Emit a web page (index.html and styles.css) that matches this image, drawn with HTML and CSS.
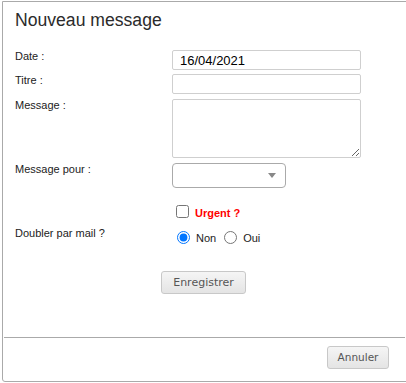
FILE: index.html
```html
<!DOCTYPE html>
<html lang="fr">
<head>
<meta charset="utf-8">
<title>Nouveau message</title>
<link rel="stylesheet" href="styles.css">
</head>
<body>
<div class="dialog">
  <h1 class="title">Nouveau message</h1>
  <form class="form">
    <div class="row row-date">
      <label class="label">Date :</label>
      <input class="field" type="text" value="16/04/2021">
    </div>
    <div class="row row-titre">
      <label class="label">Titre :</label>
      <input class="field" type="text" value="">
    </div>
    <div class="row row-message">
      <label class="label">Message :</label>
      <textarea class="area"></textarea>
    </div>
    <div class="row row-pour">
      <label class="label">Message pour :</label>
      <div class="select"><span class="arrow"></span></div>
    </div>
    <div class="row row-urgent">
      <span class="label"></span>
      <div class="check">
        <input class="checkbox" type="checkbox" id="urgent">
        <label class="urgent" for="urgent">Urgent ?</label>
      </div>
    </div>
    <div class="row row-mail">
      <label class="label">Doubler par mail ?</label>
      <div class="radios">
        <input class="radio" type="radio" name="mail" id="non" checked>
        <label class="opt" for="non">Non</label>
        <input class="radio radio-oui" type="radio" name="mail" id="oui">
        <label class="opt" for="oui">Oui</label>
      </div>
    </div>
    <div class="actions">
      <button type="button" class="btn btn-save">Enregistrer</button>
    </div>
  </form>
  <div class="footer">
    <button type="button" class="btn btn-cancel">Annuler</button>
  </div>
</div>
</body>
</html>
```

FILE: styles.css
```css
html, body {
  margin: 0;
  padding: 0;
  background: #ffffff;
  overflow: hidden;
}

body {
  font-family: "Liberation Sans", Arial, sans-serif;
  color: #222;
}

.dialog {
  box-sizing: border-box;
  margin: 1px 0 0 2px;
  width: 405px;
  height: 381px;
  border: 1px solid #aaaaaa;
  border-radius: 0 0 0 3px;
  background: #fff;
  display: flex;
  flex-direction: column;
}

.title {
  margin: 0;
  padding: 8px 0 0 12px;
  font-size: 17.6px;
  line-height: 20px;
  font-weight: normal;
  color: #2b2b2b;
}

.form {
  margin: 20px 0 0 0;
  padding: 0 0 0 12px;
}

.row {
  display: flex;
  align-items: flex-start;
}

.label {
  width: 157px;
  flex: none;
  font-size: 11px;
  line-height: 13px;
  color: #222;
}

.row-date { margin-bottom: 4px; }
.row-titre { margin-bottom: 5px; }
.row-message { margin-bottom: 5px; }
.row-urgent { margin-top: 17px; }
.row-mail { margin-top: 9px; }

.field {
  box-sizing: border-box;
  width: 189px;
  height: 20px;
  margin: 0;
  padding: 0 7px;
  border: 1px solid #cfcfcf;
  border-radius: 2px;
  font-family: "Liberation Sans", Arial, sans-serif;
  font-size: 13px;
  color: #000;
  background: #fff;
  outline: none;
}

.area {
  display: block;
  box-sizing: border-box;
  width: 189px;
  height: 59px;
  margin: 0;
  padding: 2px 4px;
  border: 1px solid #cfcfcf;
  border-radius: 2px;
  font-family: "Liberation Sans", Arial, sans-serif;
  font-size: 13px;
  background: #fff;
}

.select {
  box-sizing: border-box;
  width: 114px;
  height: 25px;
  border: 1px solid #aaaaaa;
  border-radius: 4px;
  background: #fff;
  display: flex;
  align-items: center;
  justify-content: flex-end;
  padding-right: 9px;
}

.arrow {
  width: 0;
  height: 0;
  border-style: solid;
  border-width: 5px 4px 0 4px;
  border-color: #888 transparent transparent transparent;
}

.check {
  display: flex;
  align-items: center;
  height: 13px;
}

.checkbox {
  width: 13px;
  height: 13px;
  margin: 0 6px 0 4px;
}

.urgent {
  font-size: 11px;
  line-height: 13px;
  font-weight: bold;
  color: #ff0000;
  position: relative;
  top: 2px;
}

.radios {
  display: flex;
  align-items: center;
  padding-top: 4px;
}

.radio {
  width: 13px;
  height: 13px;
  margin: 0 6px 0 5px;
}

.radio-oui {
  margin-left: 8px;
}

.opt {
  font-size: 11px;
  line-height: 13px;
  color: #222;
  position: relative;
  top: 1px;
}

.actions {
  margin-top: 27px;
  padding-right: 14px;
  display: flex;
  justify-content: center;
}

.btn {
  box-sizing: border-box;
  height: 23px;
  padding: 0;
  border: 1px solid #c8c8c8;
  border-radius: 3px;
  background: linear-gradient(#f5f5f5, #e4e4e4);
  font-family: "DejaVu Sans", Verdana, sans-serif;
  font-size: 11px;
  line-height: 21px;
  color: #555;
  text-align: center;
}

.btn-save { width: 85px; }
.btn-cancel { width: 62px; font-size: 10.5px; }

.footer {
  margin: auto 1px 0 1px;
  border-top: 1px solid #aaaaaa;
  padding: 8px 16px 12px 0;
  display: flex;
  justify-content: flex-end;
}
```
